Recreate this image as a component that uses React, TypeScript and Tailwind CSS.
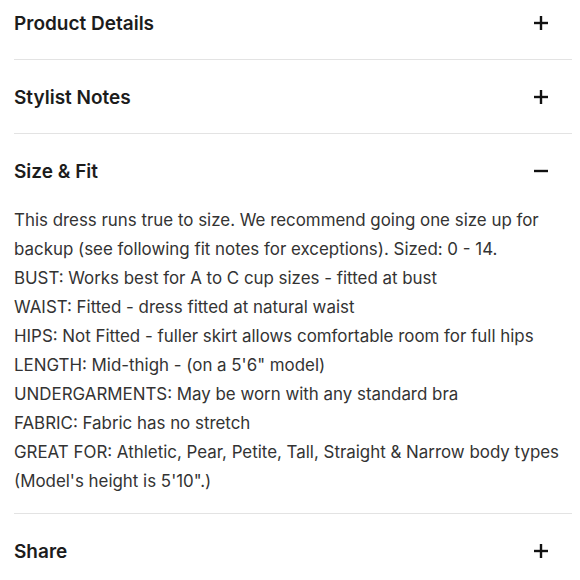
const sizeFit = [
  'This dress runs true to size. We recommend going one size up for backup (see following fit notes for exceptions). Sized: 0 - 14.',
  'BUST: Works best for A to C cup sizes - fitted at bust',
  'WAIST: Fitted - dress fitted at natural waist',
  'HIPS: Not Fitted - fuller skirt allows comfortable room for full hips',
  'LENGTH: Mid-thigh - (on a 5\'6" model)',
  'UNDERGARMENTS: May be worn with any standard bra',
  'FABRIC: Fabric has no stretch',
  'GREAT FOR: Athletic, Pear, Petite, Tall, Straight & Narrow body types',
  '(Model\'s height is 5\'10".)',
];

function Icon({ open }: { open?: boolean }) {
  return (
    <svg width="16" height="16" viewBox="0 0 16 16" className="text-[#111]">
      <path d="M1 8h14" stroke="currentColor" strokeWidth="2.4" />
      {!open && <path d="M8 1v14" stroke="currentColor" strokeWidth="2.4" />}
    </svg>
  );
}

function Row({ title, open, first }: { title: string; open?: boolean; first?: boolean }) {
  return (
    <div className={`flex items-center justify-between pr-[23px] ${first ? 'h-[59px] pb-[14px]' : 'h-[73px]'}`}>
      <span className="pt-[3px] text-[19px] font-semibold text-[#1c1c1c]">{title}</span>
      <Icon open={open} />
    </div>
  );
}

export default function App() {
  return (
    <main className="min-h-screen bg-white" style={{ fontFamily: 'Inter, "Noto Sans", sans-serif' }}>
      <div className="ml-[14px] mr-[8px]">
        <section className="border-b border-[#e3e3e3]">
          <Row title="Product Details" first />
        </section>
        <section className="border-b border-[#e3e3e3]">
          <Row title="Stylist Notes" />
        </section>
        <section className="border-b border-[#e3e3e3]">
          <Row title="Size & Fit" open />
          <div className="-mt-[1px] pb-[17px] text-[16.9px] leading-[29px] text-[#333]">
            {sizeFit.map((line) => (
              <p key={line}>{line}</p>
            ))}
          </div>
        </section>
        <section>
          <Row title="Share" />
        </section>
      </div>
    </main>
  );
}
